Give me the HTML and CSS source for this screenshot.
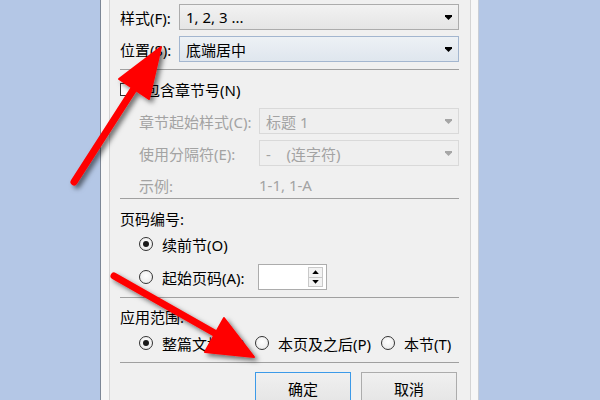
FILE: index.html
```html
<!DOCTYPE html>
<html lang="zh-CN">
<head>
  <meta charset="UTF-8">
  <title>页码格式</title>
  <link rel="stylesheet" href="styles.css">
</head>
<body>
  <div class="window">
    <div class="panel">
      <div class="row r-style">
        <span class="label">样式(F):</span>
        <div class="select">1, 2, 3 ...<i class="caret"></i></div>
      </div>
      <div class="row r-pos">
        <span class="label">位置(S):</span>
        <div class="select hot">底端居中<i class="caret"></i></div>
      </div>
      <div class="sep s1"></div>

      <div class="row r-check">
        <span class="checkbox"></span>
        <span>包含章节号(N)</span>
      </div>
      <div class="row r-chap sub disabled">
        <span class="label wide">章节起始样式(C):</span>
        <div class="select off">标题 1<i class="caret"></i></div>
      </div>
      <div class="row r-sepr sub disabled">
        <span class="label wide">使用分隔符(E):</span>
        <div class="select off">-&nbsp;&nbsp;&nbsp;&nbsp;(连字符)<i class="caret"></i></div>
      </div>
      <div class="row r-ex sub disabled">
        <span class="label wide">示例:</span>
        <span class="example">1-1, 1-A</span>
      </div>
      <div class="sep s2"></div>

      <div class="row r-head1">页码编号:</div>
      <div class="row r-cont sub">
        <span class="radio on"></span>
        <span>续前节(O)</span>
      </div>
      <div class="row r-start sub">
        <span class="radio"></span>
        <span class="start-label">起始页码(A):</span>
        <div class="spin">
          <div class="spin-btns">
            <span class="up"></span>
            <span class="down"></span>
          </div>
        </div>
      </div>
      <div class="sep s3"></div>

      <div class="row r-head2">应用范围:</div>
      <div class="row r-apply sub">
        <span class="opt"><span class="radio on"></span>整篇文档(W)</span>
        <span class="opt"><span class="radio"></span>本页及之后(P)</span>
        <span class="opt"><span class="radio"></span>本节(T)</span>
      </div>
      <div class="sep s4"></div>

      <div class="buttons">
        <button class="btn default">确定</button>
        <button class="btn">取消</button>
      </div>
    </div>
  </div>

  <svg class="arrows" width="600" height="400" viewBox="0 0 600 400">
    <defs>
      <filter id="shadow" x="-20%" y="-20%" width="140%" height="140%">
        <feDropShadow dx="3" dy="3" stdDeviation="2.5" flood-color="#000" flood-opacity="0.55"/>
      </filter>
    </defs>
    <g filter="url(#shadow)" fill="#ff0000" stroke="#ff0000" stroke-linecap="round" stroke-linejoin="round">
      <line x1="74" y1="182" x2="137" y2="84" stroke-width="7"/>
      <polygon points="161,47 149,99 119,79" stroke-width="2"/>
      <line x1="114" y1="276" x2="218" y2="335" stroke-width="7"/>
      <polygon points="254,357 205,352 224,318" stroke-width="2"/>
    </g>
  </svg>
</body>
</html>
```

FILE: styles.css
```css
body {
  margin: 0;
  width: 600px;
  height: 400px;
  overflow: hidden;
  background: #b4c7e6;
  font-family: "Noto Sans", "Noto Sans CJK SC", sans-serif;
  font-size: 15px;
  color: #000;
}

.window {
  margin-left: 100px;
  width: 362px;
  height: 400px;
  background: #f7f7f7;
  border-left: 1px solid #7d8796;
  border-right: 1px solid #c9ced6;
  padding: 0 7px 0 8px;
}

.panel {
  height: 400px;
  background: #f0f0f0;
  border-left: 1px solid #d4d4d4;
  border-right: 1px solid #d4d4d4;
  padding: 4px 11px 0 10px;
  box-sizing: border-box;
}

.row {
  display: flex;
  align-items: center;
  height: 24px;
  white-space: nowrap;
}

.sub {
  padding-left: 19px;
}

.label {
  width: 59px;
  flex: none;
}

.label.wide {
  width: 120px;
}

.select {
  position: relative;
  flex: 1;
  height: 26px;
  box-sizing: border-box;
  border: 1px solid #acacac;
  background: linear-gradient(#f2f2f2, #e5e5e5);
  padding-left: 6px;
  display: flex;
  align-items: center;
}

.select.hot {
  border-color: #a3b6cf;
  background: linear-gradient(#edf1f5, #dfe6ee);
}

.select.off {
  border-color: #d9d9d9;
  background: #efefef;
}

.caret {
  position: absolute;
  right: 6px;
  top: 10px;
  width: 7px;
  height: 5px;
  background: #000;
  clip-path: polygon(0 0, 100% 0, 100% 30%, 50% 100%, 0 30%);
}

.off .caret {
  background: #a6a6a6;
}

.disabled {
  color: #a3a3a3;
}

.r-style, .r-pos, .r-chap, .r-sepr, .r-start {
  height: 26px;
}

.r-pos { margin-top: 6px; }
.s1 { margin-top: 7px; }
.r-check { margin-top: 7px; }
.r-chap { margin-top: 7px; }
.r-sepr { margin-top: 6px; }
.r-ex { margin-top: 7px; }
.s2 { margin-top: 1px; }
.r-head1 { margin-top: 7px; }
.r-cont { margin-top: 2px; }
.r-start { margin-top: 8px; }
.s3 { margin-top: 7px; }
.r-head2 { margin-top: 6px; }
.r-apply { margin-top: 3px; }
.s4 { margin-top: 7px; }

.sep {
  height: 1px;
  background: #a0a0a0;
}

.checkbox {
  width: 11px;
  height: 11px;
  border: 1px solid #333;
  background: #fff;
  margin-right: 12px;
}

.radio {
  width: 14px;
  height: 14px;
  box-sizing: border-box;
  border: 1px solid #333;
  border-radius: 50%;
  background: radial-gradient(circle at 50% 40%, #fff, #e6e6e6);
  margin-right: 9px;
  flex: none;
  display: flex;
  align-items: center;
  justify-content: center;
}

.radio.on::after {
  content: "";
  width: 6px;
  height: 6px;
  border-radius: 50%;
  background: #1a1a1a;
}

.start-label {
  width: 96px;
}

.spin {
  width: 69px;
  height: 26px;
  box-sizing: border-box;
  border: 1px solid #acacac;
  background: #fff;
  display: flex;
  justify-content: flex-end;
  padding: 2px 3px 2px 0;
}

.spin-btns {
  width: 13px;
  display: flex;
  flex-direction: column;
  border: 1px solid #c9c9c9;
  background: #f3f3f3;
}

.spin-btns span {
  flex: 1;
  display: flex;
  align-items: center;
  justify-content: center;
}

.spin-btns span + span {
  border-top: 1px solid #c9c9c9;
}

.spin-btns .up::after,
.spin-btns .down::after {
  content: "";
  width: 7px;
  height: 4px;
  background: #000;
}

.spin-btns .up::after {
  clip-path: polygon(50% 0, 100% 100%, 0 100%);
}

.spin-btns .down::after {
  clip-path: polygon(0 0, 100% 0, 50% 100%);
}

.r-apply .opt {
  display: flex;
  align-items: center;
}

.r-apply .opt:nth-child(1) { width: 116px; }
.r-apply .opt:nth-child(2) { width: 126px; }

.buttons {
  display: flex;
  justify-content: flex-end;
  gap: 10px;
  margin-top: 9px;
  padding-right: 2px;
}

.btn {
  width: 96px;
  height: 32px;
  border: 1px solid #acacac;
  background: linear-gradient(#f0f0f0, #e5e5e5);
  font-family: inherit;
  font-size: 15px;
  color: #000;
  padding: 0;
}

.btn.default {
  border-color: #3c9ae8;
}

.arrows {
  position: absolute;
  top: 0;
  left: 0;
}
```
